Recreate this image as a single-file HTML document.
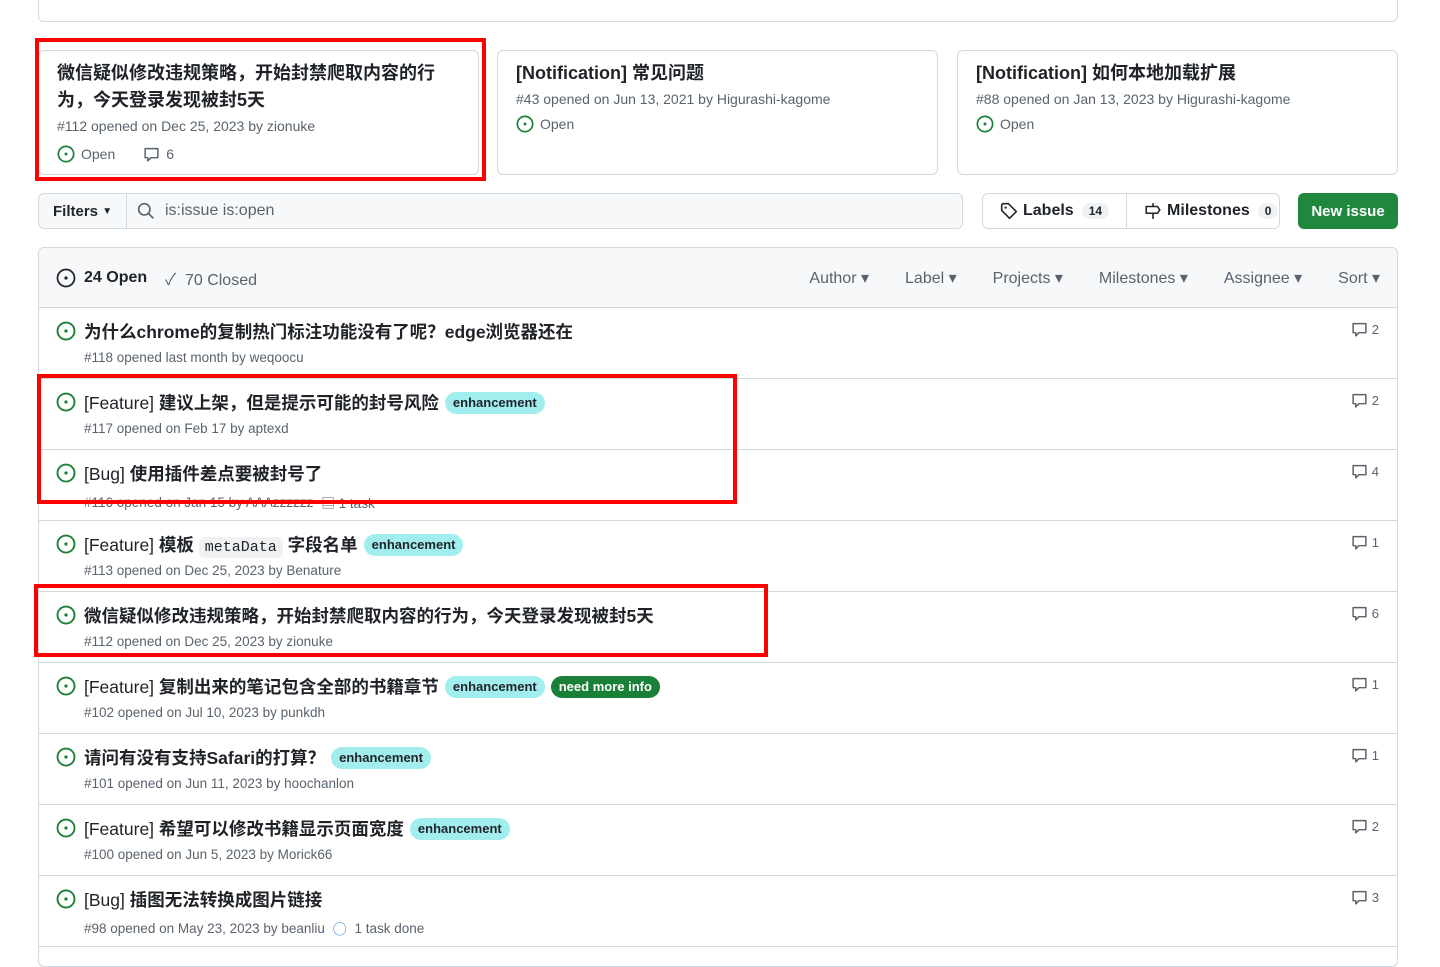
<!DOCTYPE html>
<html><head><meta charset="utf-8"><style>
*{box-sizing:border-box;margin:0;padding:0}
body{width:1440px;height:940px;overflow:hidden;background:#fff;font-family:"Liberation Sans","Noto Sans CJK SC",sans-serif;color:#1f2328;position:relative}
.abs{position:absolute}
.top{left:38px;top:-10px;width:1360px;height:32px;border:1px solid #d1d9e0;border-radius:6px}
.card{top:50px;width:441px;height:125px;border:1px solid #d1d9e0;border-radius:6px;padding:9px 18px}
.card h3{font-size:18px;font-weight:700;line-height:27px}
.meta{font-size:14px;color:#59636e;margin-top:4px}
.open{font-size:14px;color:#59636e;display:flex;align-items:center;gap:6px;margin-top:11px}
.red{border:4px solid #f00}
.filter{left:38px;top:193px;width:925px;height:36px;border:1px solid #d1d9e0;border-radius:6px;background:#f6f8fa;display:flex;align-items:center}
.filter .f{width:88px;height:100%;border-right:1px solid #d1d9e0;font-size:15px;font-weight:700;display:flex;align-items:center;padding-left:14px}
.filter .s{padding-left:10px;display:flex;align-items:center;gap:10px;color:#59636e;font-size:16px}
.lm{left:982px;top:193px;width:298px;height:36px;border:1px solid #d1d9e0;border-radius:6px;display:flex;font-size:16px;font-weight:700}
.lm div{display:flex;align-items:center;gap:5px;padding:0 17px}
.cnt{background:#eff2f5;border-radius:10px;font-size:12px;padding:1px 7px;margin-left:3px}
.new{left:1298px;top:193px;width:100px;height:36px;background:#1f883d;border-radius:6px;color:#fff;font-size:15px;font-weight:700;display:flex;align-items:center;justify-content:center}
.box{left:38px;top:247px;width:1360px;height:720px;border:1px solid #d1d9e0;border-radius:6px;overflow:hidden}
.hdr{height:60px;background:#f6f8fa;border-bottom:1px solid #d1d9e0;display:flex;align-items:center;padding:0 17px;font-size:16px}
.hdr .r{margin-left:auto;display:flex;gap:36px;color:#59636e}
.row{height:71px;border-bottom:1px solid #d1d9e0;position:relative}
.row .ic{position:absolute;left:17px;top:13px}
.row .t{position:absolute;left:45px;top:11px;font-size:17.5px;font-weight:700;display:flex;align-items:center;gap:6px;white-space:nowrap}
.row .t b{font-weight:400}
.row .m{position:absolute;left:45px;top:42px;font-size:13.5px;color:#59636e;display:flex;gap:8px;align-items:center}
.row .c{position:absolute;right:18px;top:13px;font-size:13px;color:#59636e;display:flex;gap:4px;align-items:center}
.lab{background:#a2eeef;color:#1f2328;font-size:13px;font-weight:700;border-radius:12px;padding:2px 8px;line-height:18px}
.lab.g{background:#1a7f37;color:#fff}
code{font-family:"Liberation Mono",monospace;background:#eff1f3;font-size:15px;padding:2px 6px;border-radius:6px;font-weight:400}
</style></head><body>
<svg width="0" height="0" style="position:absolute"><defs>
<symbol id="io" viewBox="0 0 16 16"><circle cx="8" cy="8" r="6.8" fill="none" stroke="#1a7f37" stroke-width="1.5"/><circle cx="8" cy="8" r="1.3" fill="#1a7f37"/></symbol>
<symbol id="cm" viewBox="0 0 16 16"><path d="M2 2.5h12v8.5H7.5L4.5 14v-3H2z" fill="none" stroke="#59636e" stroke-width="1.4" stroke-linejoin="round"/></symbol>
</defs></svg>
<div class="abs top"></div>
<div class="abs card" style="left:38px"><h3>微信疑似修改违规策略，开始封禁爬取内容的行为，今天登录发现被封5天</h3><div class="meta">#112 opened on Dec 25, 2023 by zionuke</div><div class="open"><svg width="18" height="18"><use href="#io"/></svg>Open<span style="width:16px"></span><svg width="17" height="17"><use href="#cm"/></svg>6</div></div>
<div class="abs card" style="left:497px"><h3>[Notification] 常见问题</h3><div class="meta">#43 opened on Jun 13, 2021 by Higurashi-kagome</div><div class="open" style="margin-top:8px"><svg width="18" height="18"><use href="#io"/></svg>Open</div></div>
<div class="abs card" style="left:957px"><h3>[Notification] 如何本地加载扩展</h3><div class="meta">#88 opened on Jan 13, 2023 by Higurashi-kagome</div><div class="open" style="margin-top:8px"><svg width="18" height="18"><use href="#io"/></svg>Open</div></div>
<div class="abs filter"><div class="f">Filters&nbsp;<span style="font-size:10px">▼</span></div><div class="s"><svg width="18" height="18" viewBox="0 0 16 16"><circle cx="6.5" cy="6.5" r="5" fill="none" stroke="#59636e" stroke-width="1.5"/><path d="M10 10l4.5 4.5" stroke="#59636e" stroke-width="1.5"/></svg>is:issue is:open</div></div>
<div class="abs lm"><div style="border-right:1px solid #d1d9e0"><svg width="18" height="18" viewBox="0 0 16 16"><path d="M1.5 2.5v5l7 7 6-6-7-7h-5z" fill="none" stroke="#1f2328" stroke-width="1.4" stroke-linejoin="round"/><circle cx="5" cy="5" r="1" fill="#1f2328"/></svg>Labels<span class="cnt">14</span></div><div><svg width="18" height="18" viewBox="0 0 16 16"><path d="M8 1v3M8 10v5M2 4h10l2 3-2 3H2z" fill="none" stroke="#1f2328" stroke-width="1.4"/></svg>Milestones<span class="cnt">0</span></div></div>
<div class="abs new">New issue</div>
<div class="abs box">
<div class="hdr"><svg width="20" height="20" viewBox="0 0 16 16"><circle cx="8" cy="8" r="6.8" fill="none" stroke="#1f2328" stroke-width="1.4"/><circle cx="8" cy="8" r="1.3" fill="#1f2328"/></svg><span style="font-weight:700;margin-left:8px">24 Open</span><span style="color:#59636e;margin-left:18px">✓&nbsp;&nbsp;70 Closed</span>
<div class="r"><span>Author ▾</span><span>Label ▾</span><span>Projects ▾</span><span>Milestones ▾</span><span>Assignee ▾</span><span>Sort ▾</span></div></div>
<div class="row"><svg class="ic" width="20" height="20"><use href="#io"/></svg><div class="t">为什么chrome的复制热门标注功能没有了呢？edge浏览器还在</div><div class="m">#118 opened last month by weqoocu</div><div class="c"><svg width="17" height="17"><use href="#cm"/></svg>2</div></div>
<div class="row"><svg class="ic" width="20" height="20"><use href="#io"/></svg><div class="t"><span><b>[Feature]</b> 建议上架，但是提示可能的封号风险</span><span class="lab">enhancement</span></div><div class="m">#117 opened on Feb 17 by aptexd</div><div class="c"><svg width="17" height="17"><use href="#cm"/></svg>2</div></div>
<div class="row"><svg class="ic" width="20" height="20"><use href="#io"/></svg><div class="t"><span><b>[Bug]</b> 使用插件差点要被封号了</span></div><div class="m">#116 opened on Jan 15 by AAAzzzzzz <span>▤ 1 task</span></div><div class="c"><svg width="17" height="17"><use href="#cm"/></svg>4</div></div>
<div class="row"><svg class="ic" width="20" height="20"><use href="#io"/></svg><div class="t"><span><b>[Feature]</b> 模板 <code>metaData</code> 字段名单</span><span class="lab">enhancement</span></div><div class="m">#113 opened on Dec 25, 2023 by Benature</div><div class="c"><svg width="17" height="17"><use href="#cm"/></svg>1</div></div>
<div class="row"><svg class="ic" width="20" height="20"><use href="#io"/></svg><div class="t">微信疑似修改违规策略，开始封禁爬取内容的行为，今天登录发现被封5天</div><div class="m">#112 opened on Dec 25, 2023 by zionuke</div><div class="c"><svg width="17" height="17"><use href="#cm"/></svg>6</div></div>
<div class="row"><svg class="ic" width="20" height="20"><use href="#io"/></svg><div class="t"><span><b>[Feature]</b> 复制出来的笔记包含全部的书籍章节</span><span class="lab">enhancement</span><span class="lab g">need more info</span></div><div class="m">#102 opened on Jul 10, 2023 by punkdh</div><div class="c"><svg width="17" height="17"><use href="#cm"/></svg>1</div></div>
<div class="row"><svg class="ic" width="20" height="20"><use href="#io"/></svg><div class="t"><span>请问有没有支持Safari的打算？</span><span class="lab">enhancement</span></div><div class="m">#101 opened on Jun 11, 2023 by hoochanlon</div><div class="c"><svg width="17" height="17"><use href="#cm"/></svg>1</div></div>
<div class="row"><svg class="ic" width="20" height="20"><use href="#io"/></svg><div class="t"><span><b>[Feature]</b> 希望可以修改书籍显示页面宽度</span><span class="lab">enhancement</span></div><div class="m">#100 opened on Jun 5, 2023 by Morick66</div><div class="c"><svg width="17" height="17"><use href="#cm"/></svg>2</div></div>
<div class="row"><svg class="ic" width="20" height="20"><use href="#io"/></svg><div class="t"><span><b>[Bug]</b> 插图无法转换成图片链接</span></div><div class="m">#98 opened on May 23, 2023 by beanliu <span style="color:#0969da">◯</span> 1 task done</div><div class="c"><svg width="17" height="17"><use href="#cm"/></svg>3</div></div>
</div>
<div class="abs red" style="left:35px;top:38px;width:451px;height:143px"></div>
<div class="abs red" style="left:37px;top:374px;width:700px;height:130px"></div>
<div class="abs red" style="left:34px;top:584px;width:734px;height:73px"></div>
</body></html>
